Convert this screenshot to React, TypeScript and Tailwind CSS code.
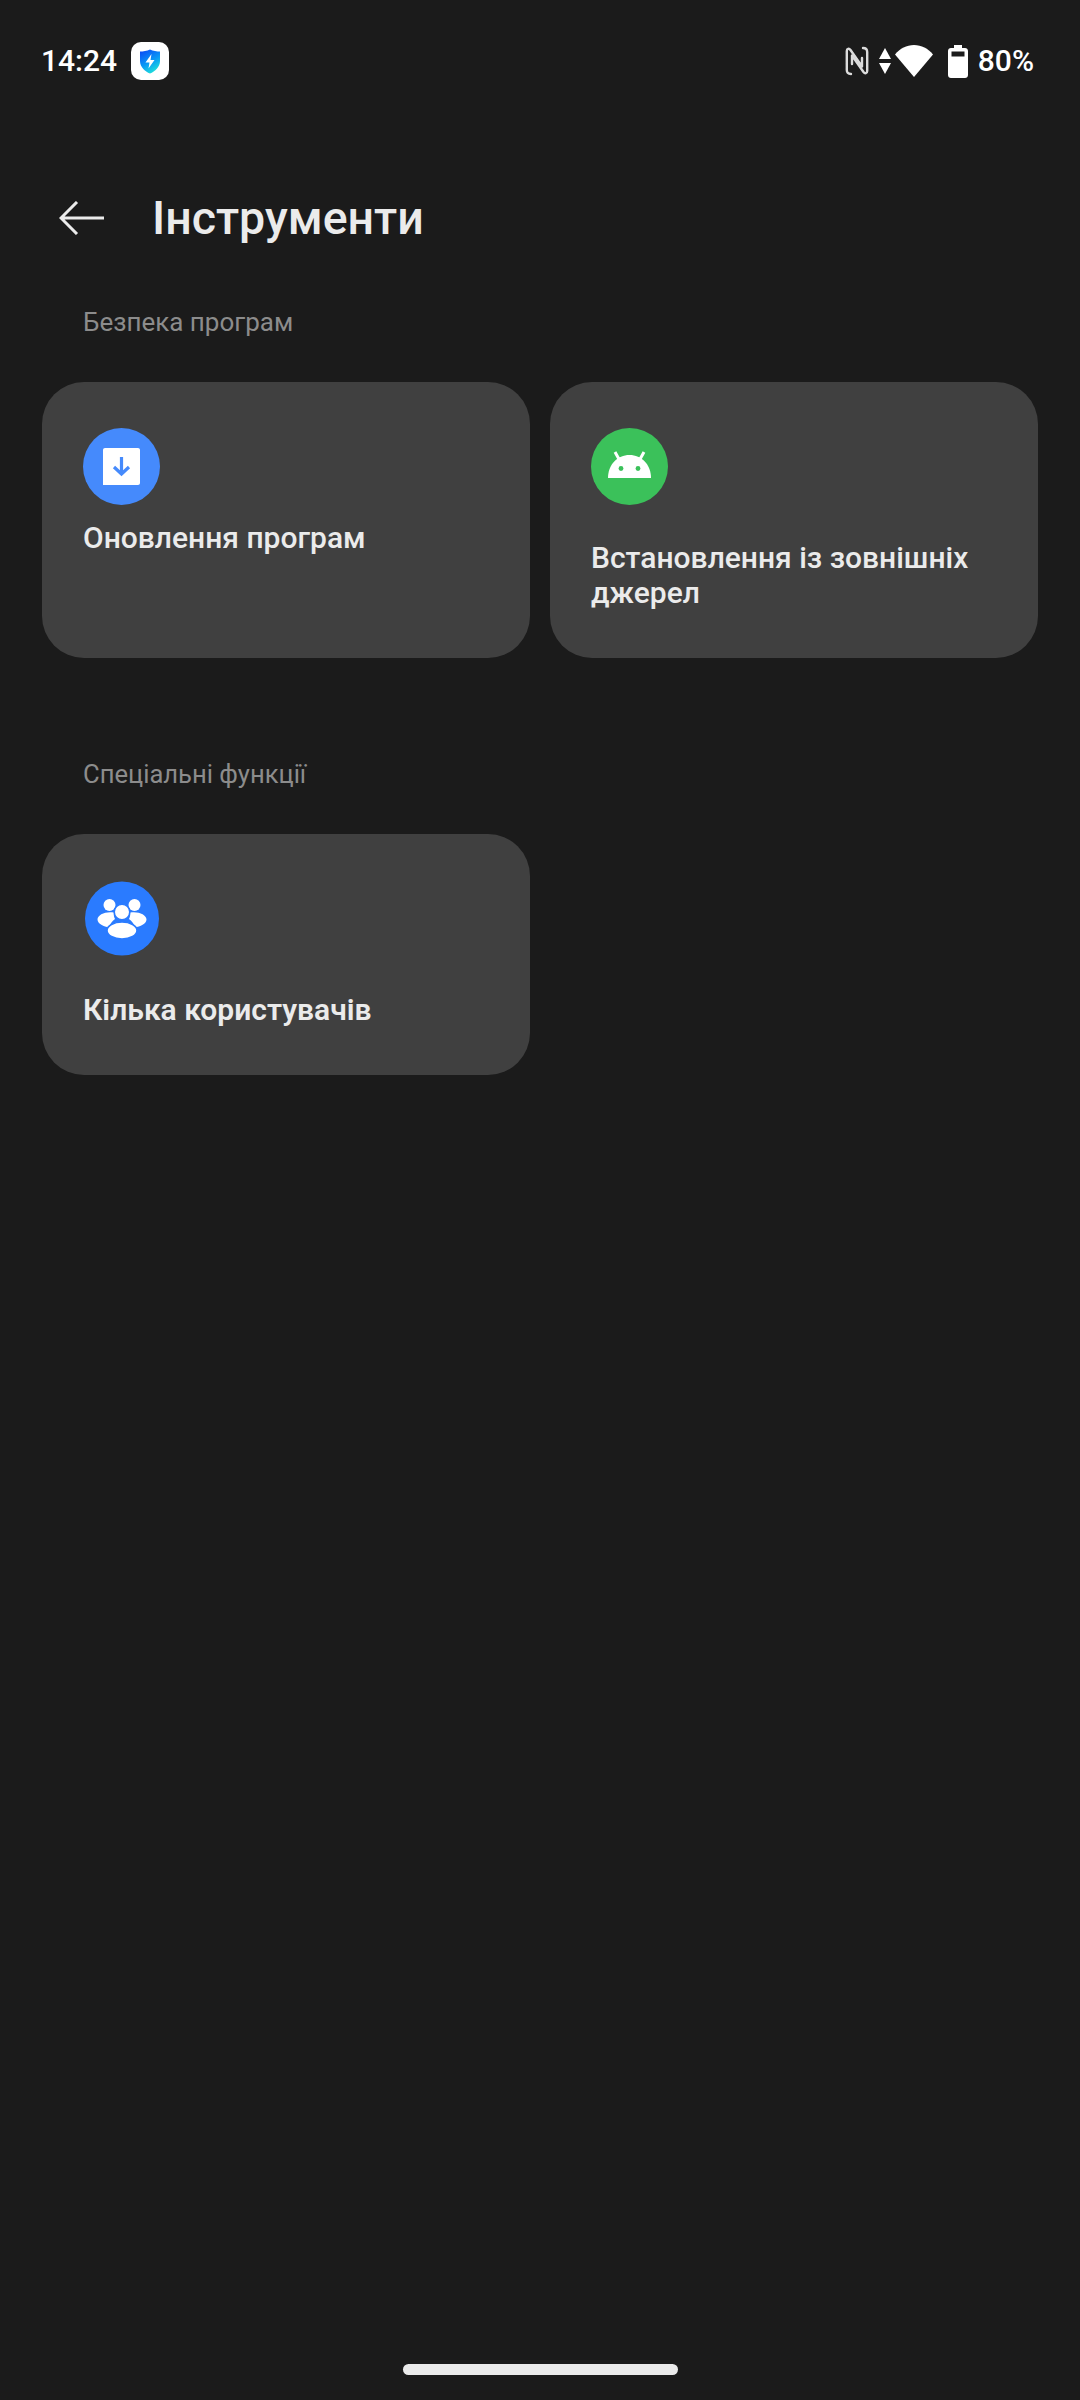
const font = { fontFamily: "Roboto, sans-serif" };

const ShieldBadge = () => (
  <div className="w-[38px] h-[38px] bg-white rounded-[10px] flex items-center justify-center">
    <svg width="22" height="25" viewBox="0 0 22 25">
      <defs>
        <linearGradient id="shield" x1="0.2" y1="0" x2="0.7" y2="1">
          <stop offset="0" stopColor="#0b4df5" />
          <stop offset="0.55" stopColor="#0a9bf5" />
          <stop offset="1" stopColor="#22e6d8" />
        </linearGradient>
      </defs>
      <path d="M11 0.5 C14 2 18 2.6 21 2.6 V12 C21 18 16 22.5 11 24.5 C6 22.5 1 18 1 12 V2.6 C4 2.6 8 2 11 0.5 Z" fill="url(#shield)" />
      <path d="M12.5 5 L6.5 13.5 H10.5 L9.5 19.5 L15.5 11 H11.5 Z" fill="#fff" />
    </svg>
  </div>
);

const NfcIcon = () => (
  <svg width="24" height="30" viewBox="0 0 24 30" fill="none" stroke="#dcdcdc" strokeWidth="2.4" strokeLinejoin="round" strokeLinecap="round">
    <path d="M6 28 C3 28 1.8 26.5 1.8 24 V5 C1.8 2.6 4 2 5.5 4 L17 20.5 V12" />
    <path d="M18 2 C21 2 22.2 3.5 22.2 6 V25 C22.2 27.4 20 28 18.5 26 L7 9.5 V18" />
  </svg>
);

const DataArrows = () => (
  <svg width="12" height="26" viewBox="0 0 12 26" fill="#fff">
    <path d="M6 0 L12 11 H0 Z" />
    <path d="M0 15 H12 L6 26 Z" />
  </svg>
);

const WifiIcon = () => (
  <svg width="38" height="32" viewBox="0 0 38 32" fill="#fff">
    <path d="M19 32 L0 9.5 C5 3.5 11.5 0 19 0 C26.5 0 33 3.5 38 9.5 Z" />
  </svg>
);

const BatteryIcon = () => (
  <svg width="20" height="33" viewBox="0 0 20 33" fill="#fff">
    <path fillRule="evenodd" d="M6 0 H14 V3 H17 C18.7 3 20 4.3 20 6 V30 C20 31.7 18.7 33 17 33 H3 C1.3 33 0 31.7 0 30 V6 C0 4.3 1.3 3 3 3 H6 Z M3.5 6.5 V11.5 H16.5 V6.5 Z" />
  </svg>
);

const DownloadIcon = () => (
  <svg width="77" height="77" viewBox="0 0 77 77">
    <circle cx="38.5" cy="38.5" r="38.5" fill="#458afc" />
    <path d="M22 20 H55 C56.1 20 57 20.9 57 22 V55 C57 56.1 56.1 57 55 57 H20 V22 C20 20.9 20.9 20 22 20 Z" fill="#fff" />
    <path d="M38.5 29 V46 M31 39 L38.5 46 L46 39" fill="none" stroke="#458afc" strokeWidth="3.2" />
  </svg>
);

const AndroidIcon = () => (
  <svg width="77" height="77" viewBox="0 0 77 77">
    <circle cx="38.5" cy="38.5" r="38.5" fill="#3bc15a" />
    <path d="M17 50 C17 36.5 26.5 27 38.5 27 C50.5 27 60 36.5 60 50 Z" fill="#fff" />
    <path d="M24 24 L29 33 M53 24 L48 33" stroke="#fff" strokeWidth="3" />
    <circle cx="30" cy="40.5" r="2.4" fill="#3bc15a" />
    <circle cx="47" cy="40.5" r="2.4" fill="#3bc15a" />
  </svg>
);

const UsersIcon = () => (
  <svg width="74" height="75" viewBox="0 0 74 75" fill="#fff">
    <circle cx="37" cy="37.5" r="37" fill="#2a7bff" />
    <circle cx="24.5" cy="24" r="6" />
    <circle cx="49.5" cy="24" r="6" />
    <path d="M29 31.5 C21 30 12.5 33.5 12.5 38.5 C12.5 43 19 45.5 24 46.5 C25 43 27 40 30 38 C29 36 28.5 34 29 31.5 Z" />
    <path d="M45 31.5 C53 30 61.5 33.5 61.5 38.5 C61.5 43 55 45.5 50 46.5 C49 43 47 40 44 38 C45 36 45.5 34 45 31.5 Z" />
    <circle cx="37" cy="31" r="7.8" stroke="#2a7bff" strokeWidth="1.6" />
    <ellipse cx="37" cy="49.5" rx="15" ry="8.5" stroke="#2a7bff" strokeWidth="1.6" />
  </svg>
);

const App = () => {
  return (
    <div className="w-[1080px] h-[2400px] bg-[#1b1b1b] flex flex-col text-[#ebebeb]" style={font}>
      <div className="h-[38px] mt-[42px] pl-[41px] pr-[46px] flex items-center justify-between">
        <div className="flex items-center gap-[14px]">
          <span className="text-[30px] font-medium text-white leading-none">14:24</span>
          <ShieldBadge />
        </div>
        <div className="flex items-center">
          <NfcIcon />
          <div className="ml-[10px] mr-[4px]"><DataArrows /></div>
          <WifiIcon />
          <div className="ml-[15px] mr-[10px]"><BatteryIcon /></div>
          <span className="text-[30px] font-medium text-white leading-none">80%</span>
        </div>
      </div>

      <div className="mt-[108px] pl-[59px] flex items-center h-[60px]">
        <svg width="46" height="34" viewBox="0 0 46 34" fill="none" stroke="#ebebeb" strokeWidth="3">
          <path d="M45 17 H2 M18 1 L2 17 L18 33" />
        </svg>
        <h1 className="ml-[47px] text-[46.5px] font-medium leading-none">Інструменти</h1>
      </div>

      <div className="mt-[58px] pl-[83px] text-[26px] leading-[32px] text-[#8c8c8c]">Безпека програм</div>

      <div className="mt-[44px] px-[42px] grid grid-cols-2 gap-[20px]">
        <div className="h-[276px] bg-[#404040] rounded-[42px] pl-[41px] pt-[46px]">
          <DownloadIcon />
          <div className="mt-[15px] text-[30px] font-medium leading-[35px]">Оновлення програм</div>
        </div>
        <div className="h-[276px] bg-[#404040] rounded-[42px] pl-[41px] pt-[46px]">
          <AndroidIcon />
          <div className="mt-[35px] text-[30px] font-medium leading-[35px]">
            Встановлення із зовнішніх<br />джерел
          </div>
        </div>
      </div>

      <div className="mt-[100px] pl-[83px] text-[25.6px] leading-[32px] text-[#8c8c8c]">Спеціальні функції</div>

      <div className="mt-[44px] px-[42px] grid grid-cols-2 gap-[20px]">
        <div className="h-[241px] bg-[#404040] rounded-[42px] pl-[43px] pt-[47px]">
          <UsersIcon />
          <div className="mt-[36px] -ml-[2px] text-[30px] font-semibold leading-[35px]">Кілька користувачів</div>
        </div>
      </div>

      <div className="mt-auto mb-[25px] mx-auto w-[275px] h-[11px] rounded-full bg-[#ebebeb]" />
    </div>
  );
};

export default App;
